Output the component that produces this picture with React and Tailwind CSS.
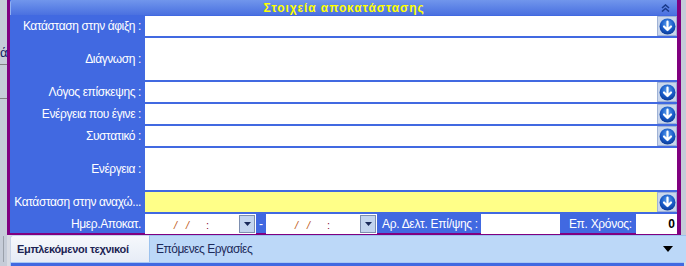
import React from "react";

const font = { fontFamily: '"Liberation Sans", Arial, sans-serif' };

function DropBtn() {
  return (
    <div className="w-[20px] h-[20px] shrink-0 bg-[#c9d6ec] border border-[#9fb2d6] flex items-center justify-center">
      <svg width="17" height="17" viewBox="0 0 17 17">
        <defs>
          <radialGradient id="g1" cx="50%" cy="35%" r="65%">
            <stop offset="0%" stopColor="#5aa0f0" />
            <stop offset="60%" stopColor="#1a5cc8" />
            <stop offset="100%" stopColor="#0a3a98" />
          </radialGradient>
        </defs>
        <circle cx="8.5" cy="8.5" r="8" fill="url(#g1)" />
        <path d="M8.5 3.5 V12 M5 8.5 L8.5 12 L12 8.5" stroke="#fff" strokeWidth="2.2" fill="none" strokeLinecap="round" strokeLinejoin="round" />
      </svg>
    </div>
  );
}

function Label({ children }) {
  return (
    <div className="w-[135px] shrink-0 flex items-center justify-end pr-[4px] text-white text-[12px] tracking-[-0.4px] leading-none whitespace-nowrap">
      {children}
    </div>
  );
}

function ComboRow({ label, yellow }) {
  return (
    <div className="flex h-[20px]">
      <Label>{label}</Label>
      <div className={`flex-1 ${yellow ? "bg-[#ffff88]" : "bg-white"}`} />
      <DropBtn />
    </div>
  );
}

function AreaRow({ label }) {
  return (
    <div className="flex h-[42px]">
      <Label>{label}</Label>
      <div className="flex-1 bg-white" />
    </div>
  );
}

function DateField() {
  return (
    <div className="w-[111px] h-[20px] bg-white flex items-center relative">
      <span className="absolute left-[29px] top-[3px] text-[11px] italic text-[#c05a20] tracking-[3px]">/ /</span>
      <span className="absolute left-[61px] top-[3px] text-[11px] text-[#8a1040]">:</span>
      <div className="absolute right-[1px] top-[1px] w-[16px] h-[18px] bg-[#c3d5ef] border border-[#7d8fb0] flex items-center justify-center">
        <svg width="7" height="4" viewBox="0 0 7 4"><path d="M0 0 H7 L3.5 4 Z" fill="#1a2a5a" /></svg>
      </div>
    </div>
  );
}

export default function App() {
  return (
    <div className="w-[686px] h-[266px] bg-[#d8dbe3] overflow-hidden relative" style={font}>
      {/* left background remnants */}
      <div className="absolute left-0 top-0 w-[7px] h-[266px] bg-[#c6ccd8]">
        <div className="absolute left-0 top-[46px] text-[13px] text-[#102060] leading-none">ά</div>
        <div className="absolute left-0 top-[64px] w-[7px] h-[1px] bg-[#808080]" />
        <div className="absolute left-0 top-[98px] w-[7px] h-[1px] bg-[#808080]" />
        <div className="absolute left-[3px] top-[236px] w-[1px] h-[26px] bg-[#9aa0aa]" />
      </div>
      <div className="absolute right-0 top-0 w-[5px] h-[235px] bg-[#c6ccd8]" />

      <div className="ml-[7px] mr-[5px] h-[235px] border-l-[3px] border-r-[4px] border-b-2 border-[#800080] bg-[#4169e1] flex flex-col">
        {/* header */}
        <div className="h-[15px] shrink-0 bg-gradient-to-b from-[#7196ec] to-[#4a70e0] relative flex items-center justify-center border-l border-[#8fb0f4] rounded-tl-[3px]">
          <span className="text-[12px] font-bold text-[#ffff00] leading-none tracking-[0.9px]">Στοιχεία αποκατάστασης</span>
          <svg className="absolute right-[7px] top-[4px]" width="9" height="8" viewBox="0 0 9 8">
            <path d="M1 4 L4.5 1 L8 4 M1 7.5 L4.5 4.5 L8 7.5" stroke="#1a3a8a" strokeWidth="1.6" fill="none" />
          </svg>
        </div>
        <div className="flex flex-col gap-[2px] pt-[1px]">
          <ComboRow label="Κατάσταση στην άφιξη :" />
          <AreaRow label="Διάγνωση :" />
          <ComboRow label="Λόγος επίσκεψης :" />
          <ComboRow label="Ενέργεια που έγινε :" />
          <ComboRow label="Συστατικό :" />
          <AreaRow label="Ενέργεια :" />
          <ComboRow label="Κατάσταση στην αναχώ..." yellow />
          <div className="flex h-[20px] items-center">
            <Label>Ημερ.Αποκατ.</Label>
            <DateField />
            <span className="w-[10px] text-center text-white text-[12px]">-</span>
            <DateField />
            <span className="ml-[5px] text-white text-[12px] tracking-[-0.3px] whitespace-nowrap">Αρ. Δελτ. Επί/ψης :</span>
            <div className="ml-[3px] w-[79px] h-[20px] bg-white" />
            <span className="ml-[9px] text-white text-[12px] tracking-[-0.3px] whitespace-nowrap">Επ. Χρόνος:</span>
            <div className="ml-[4px] flex-1 h-[20px] bg-white flex items-center justify-end pr-[2px]">
              <span className="text-[12px] font-bold text-black leading-none">0</span>
            </div>
          </div>
        </div>
      </div>

      {/* tabs */}
      <div className="ml-[10px] h-[27px] flex">
        <div className="w-[139px] bg-gradient-to-b from-[#f6f8fc] to-[#e6ecf6] border-t border-l border-[#c8d4e8] flex items-center pl-[6px] rounded-tl-[3px]">
          <span className="text-[11px] font-bold text-[#1c2454] tracking-[-0.3px] whitespace-nowrap">Εμπλεκόμενοι τεχνικοί</span>
        </div>
        <div className="flex-1 bg-[#bcd8f8] border-l border-t border-[#9cc2ee] flex items-center pl-[6px] pr-[13px] justify-between">
          <span className="text-[12px] text-[#1c2a5a] tracking-[-0.5px] whitespace-nowrap">Επόμενες Εργασίες</span>
          <svg width="10" height="6" viewBox="0 0 10 6"><path d="M0 0 H10 L5 6 Z" fill="#000" /></svg>
        </div>
      </div>
      <div className="ml-[10px] mr-[2px] h-[4px] bg-[#4169e1] border-t border-l border-[#a8c8f4]" />
    </div>
  );
}
